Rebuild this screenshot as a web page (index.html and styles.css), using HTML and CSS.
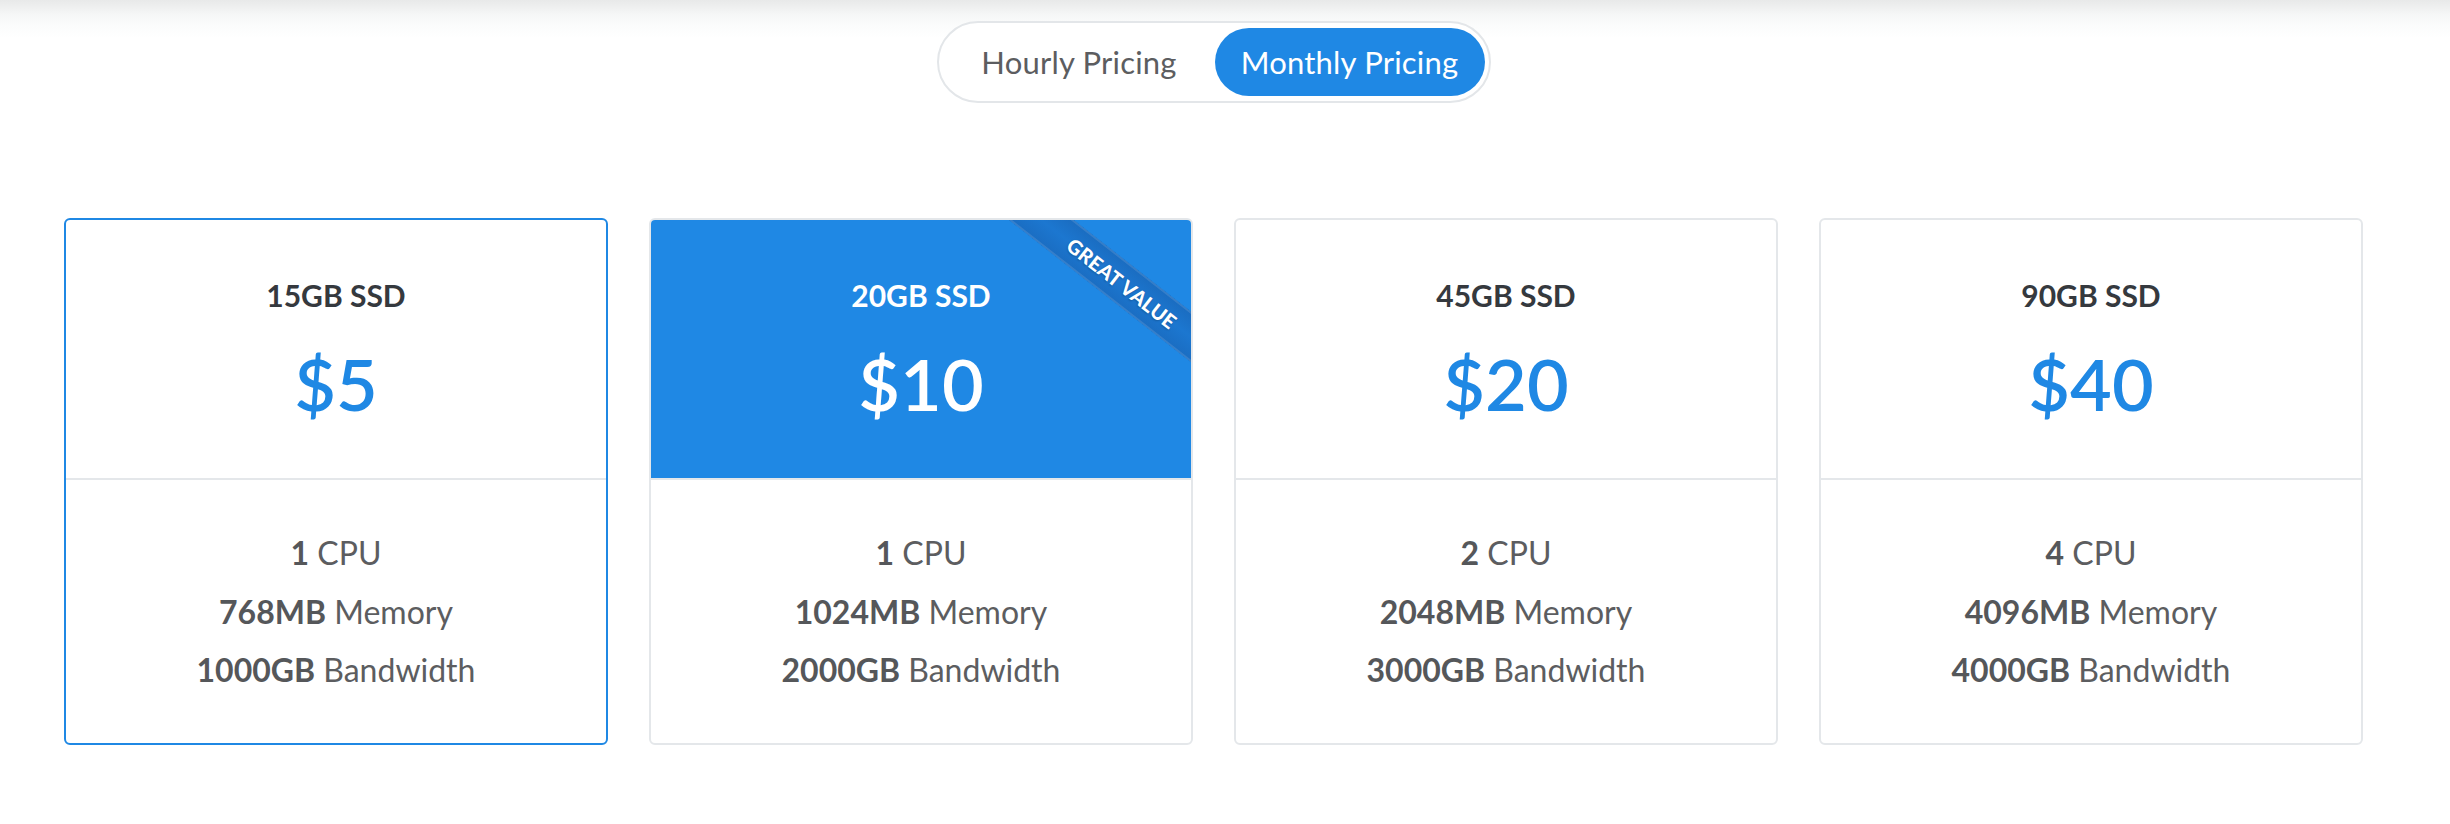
FILE: index.html
```html
<!DOCTYPE html>
<html>
<head>
<meta charset="utf-8">
<link rel="stylesheet" href="styles.css">
</head>
<body>
<div class="page">
  <div class="toggle-wrap">
    <div class="toggle">
      <span class="opt">Hourly Pricing</span>
      <span class="opt active">Monthly Pricing</span>
    </div>
  </div>
  <div class="plans">
    <div class="card selected">
      <div class="head">
        <div class="title">15GB SSD</div>
        <div class="price">$5</div>
      </div>
      <div class="feats">
        <div class="feat"><b>1</b> CPU</div>
        <div class="feat"><b>768MB</b> Memory</div>
        <div class="feat"><b>1000GB</b> Bandwidth</div>
      </div>
    </div>
    <div class="card featured">
      <div class="head">
        <div class="ribbon">GREAT VALUE</div>
        <div class="title">20GB SSD</div>
        <div class="price">$10</div>
      </div>
      <div class="feats">
        <div class="feat"><b>1</b> CPU</div>
        <div class="feat"><b>1024MB</b> Memory</div>
        <div class="feat"><b>2000GB</b> Bandwidth</div>
      </div>
    </div>
    <div class="card">
      <div class="head">
        <div class="title">45GB SSD</div>
        <div class="price">$20</div>
      </div>
      <div class="feats">
        <div class="feat"><b>2</b> CPU</div>
        <div class="feat"><b>2048MB</b> Memory</div>
        <div class="feat"><b>3000GB</b> Bandwidth</div>
      </div>
    </div>
    <div class="card">
      <div class="head">
        <div class="title">90GB SSD</div>
        <div class="price">$40</div>
      </div>
      <div class="feats">
        <div class="feat"><b>4</b> CPU</div>
        <div class="feat"><b>4096MB</b> Memory</div>
        <div class="feat"><b>4000GB</b> Bandwidth</div>
      </div>
    </div>
  </div>
</div>
</body>
</html>
```
FILE: styles.css
```css
html, body {
  margin: 0;
  padding: 0;
}
body {
  background: #fff linear-gradient(#e8e9e9 0px, #f5f6f6 14px, #fbfcfc 26px, #ffffff 38px) no-repeat;
  background-size: 100% 40px;
  font-family: Lato, "Open Sans", "DejaVu Sans", sans-serif;
  color: #5c5d60;
  height: 824px;
  overflow: hidden;
}
.page {
  width: 2427px;
}
.toggle-wrap {
  display: flex;
  justify-content: center;
  padding-top: 21px;
}
.toggle {
  display: flex;
  border: 2px solid #e3e6e9;
  border-radius: 50px;
  padding: 5px 4px 5px 5px;
  background: #fff;
}
.opt {
  display: flex;
  align-items: center;
  justify-content: center;
  height: 68px;
  width: 271px;
  border-radius: 34px;
  font-size: 31px;
  color: #5c5d60;
  letter-spacing: 0.2px;
}
.opt.active {
  width: 270px;
  background: #1f88e4;
  color: #fff;
}
.plans {
  display: flex;
  gap: 41px;
  padding-left: 64px;
  margin-top: 115px;
}
.card {
  box-sizing: border-box;
  width: 544px;
  height: 527px;
  border: 2px solid #e4e7ea;
  border-radius: 6px;
  overflow: hidden;
  background: #fff;
}
.card.selected {
  border-color: #1f88e4;
}
.head {
  position: relative;
  overflow: hidden;
  height: 260px;
  box-sizing: border-box;
  padding-top: 55px;
  border-bottom: 2px solid #e4e7ea;
  text-align: center;
}
.title {
  font-size: 30px;
  line-height: 40px;
  font-weight: 700;
  color: #35393e;
}
.price {
  margin-top: 28px;
  font-size: 72px;
  line-height: 80px;
  font-weight: 600;
  color: #1f88e4;
}
.featured .head {
  background: #1f88e4;
  border-bottom-color: #e4e7ea;
}
.featured .title,
.featured .price {
  color: #fff;
}
.ribbon {
  position: absolute;
  left: 336px;
  top: 43px;
  width: 270px;
  height: 40px;
  line-height: 40px;
  transform: rotate(38deg);
  background: linear-gradient(#1a6cc0, #1c77d0 50%, #1a6dc2);
  box-shadow: inset 0 2px 0 rgba(255,255,255,0.12), inset 0 -2px 0 rgba(255,255,255,0.12);
  color: #fff;
  font-size: 20px;
  font-weight: 900;
  text-align: center;
  letter-spacing: 0.2px;
  text-shadow: 0 1px 2px rgba(0,0,0,0.25);
}
.feats {
  padding-top: 44px;
  text-align: center;
}
.feat {
  font-size: 32px;
  line-height: 58.5px;
  color: #5c5d60;
}
.feat b {
  font-weight: 700;
  color: #55575a;
}
```
